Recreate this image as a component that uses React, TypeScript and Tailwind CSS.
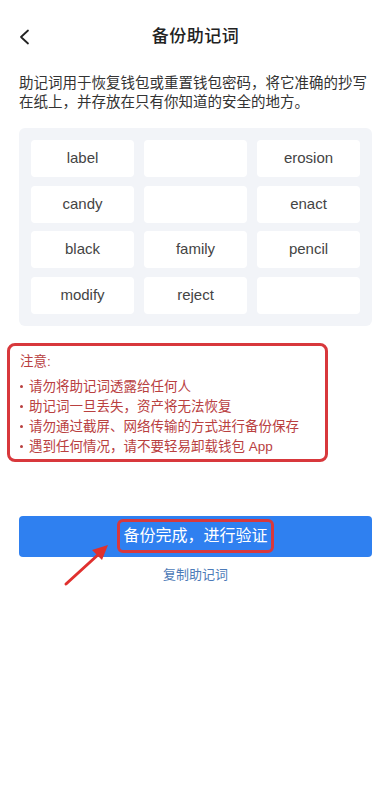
import React from "react";

const words = ["label", "", "erosion", "candy", "", "enact", "black", "family", "pencil", "modify", "reject", ""];

const notes = [
  "请勿将助记词透露给任何人",
  "助记词一旦丢失，资产将无法恢复",
  "请勿通过截屏、网络传输的方式进行备份保存",
  "遇到任何情况，请不要轻易卸载钱包 App",
];

export default function App() {
  return (
    <div
      className="relative w-[391px] h-[800px] bg-white overflow-hidden"
      style={{ fontFamily: '"Liberation Sans", "Noto Sans CJK SC", sans-serif' }}
    >
      {/* Header */}
      <div className="relative h-[74px] flex items-center justify-center">
        <svg className="absolute left-[18px] top-[29px]" width="12" height="16" viewBox="0 0 12 16" fill="none">
          <path d="M10 1.5 L3 8 L10 14.5" stroke="#222" strokeWidth="1.8" strokeLinecap="round" strokeLinejoin="round" />
        </svg>
        <div className="text-[17px] font-medium text-[#222] tracking-[0.5px]">备份助记词</div>
      </div>

      {/* Description */}
      <p className="px-[19px] text-[14.5px] leading-[19px] text-[#333]">
        助记词用于恢复钱包或重置钱包密码，将它准确的抄写在纸上，并存放在只有你知道的安全的地方。
      </p>

      {/* Word grid */}
      <div className="mx-[19px] mt-[16px] bg-[#f2f4f8] rounded-[6px] p-[12px] grid grid-cols-3 gap-x-[10px] gap-y-[8.5px]">
        {words.map((w, i) => (
          <div
            key={i}
            className="h-[37px] bg-white rounded-[4px] flex items-center justify-center text-[15px] text-[#444]"
          >
            {w}
          </div>
        ))}
      </div>

      {/* Warning */}
      <div className="ml-[7px] mt-[17px] w-[321px] border-[3px] border-[#d8383c] rounded-[8px] pl-[10px] pt-[6px] pb-[2px] text-[13.5px] leading-[20px] text-[#b9403f]">
        <div className="mb-[5px]">注意:</div>
        {notes.map((n, i) => (
          <div key={i} className="flex items-center">
            <span className="w-[9px] flex items-center">
              <span className="w-[3px] h-[3px] rounded-full bg-[#b9403f]" />
            </span>
            <span>{n}</span>
          </div>
        ))}
      </div>

      {/* Button */}
      <div className="mx-[19px] mt-[54px] h-[41px] bg-[#2f80f0] rounded-[4px] flex items-center justify-center">
        <span className="border-[3px] border-[#d8383c] rounded-[6px] px-[3.5px] h-[34px] flex items-center text-[16px] text-white">
          备份完成，进行验证
        </span>
      </div>

      <div className="mt-[8px] text-center text-[13px] leading-[20px] text-[#4d7bb8]">复制助记词</div>

      {/* Annotation arrow */}
      <svg className="absolute left-0 top-0 pointer-events-none" width="391" height="800" viewBox="0 0 391 800">
        <line x1="66" y1="584" x2="100" y2="553" stroke="#e0302e" strokeWidth="3" strokeLinecap="round" />
        <polygon points="108,545 92,550 102,560" fill="#e0302e" />
      </svg>
    </div>
  );
}
